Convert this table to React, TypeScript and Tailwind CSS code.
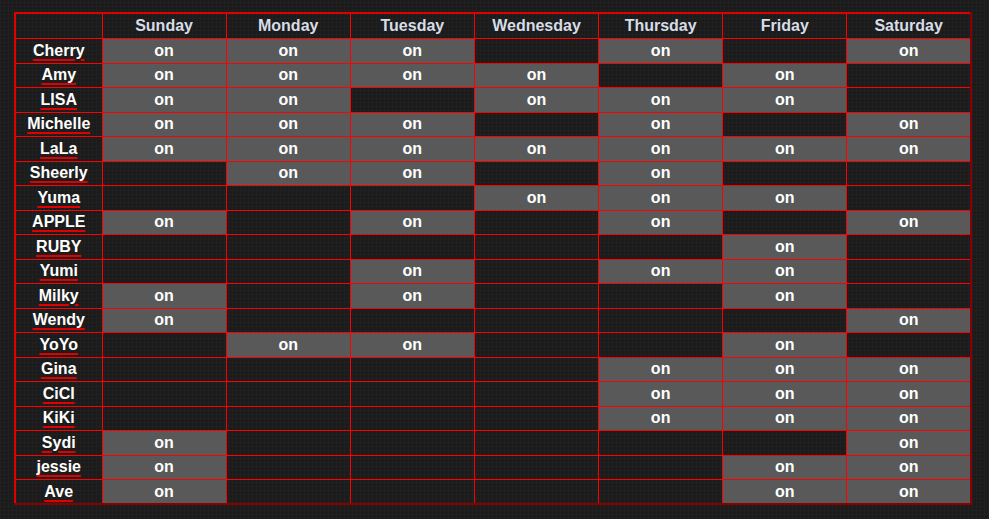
import React from 'react';

const DAYS = ['Sunday', 'Monday', 'Tuesday', 'Wednesday', 'Thursday', 'Friday', 'Saturday'];

// 1 = on, 0 = off (Sun..Sat)
const SCHEDULE: { name: string; days: number[] }[] = [
  { name: 'Cherry', days: [1, 1, 1, 0, 1, 0, 1] },
  { name: 'Amy', days: [1, 1, 1, 1, 0, 1, 0] },
  { name: 'LISA', days: [1, 1, 0, 1, 1, 1, 0] },
  { name: 'Michelle', days: [1, 1, 1, 0, 1, 0, 1] },
  { name: 'LaLa', days: [1, 1, 1, 1, 1, 1, 1] },
  { name: 'Sheerly', days: [0, 1, 1, 0, 1, 0, 0] },
  { name: 'Yuma', days: [0, 0, 0, 1, 1, 1, 0] },
  { name: 'APPLE', days: [1, 0, 1, 0, 1, 0, 1] },
  { name: 'RUBY', days: [0, 0, 0, 0, 0, 1, 0] },
  { name: 'Yumi', days: [0, 0, 1, 0, 1, 1, 0] },
  { name: 'Milky', days: [1, 0, 1, 0, 0, 1, 0] },
  { name: 'Wendy', days: [1, 0, 0, 0, 0, 0, 1] },
  { name: 'YoYo', days: [0, 1, 1, 0, 0, 1, 0] },
  { name: 'Gina', days: [0, 0, 0, 0, 1, 1, 1] },
  { name: 'CiCI', days: [0, 0, 0, 0, 1, 1, 1] },
  { name: 'KiKi', days: [0, 0, 0, 0, 1, 1, 1] },
  { name: 'Sydi', days: [1, 0, 0, 0, 0, 0, 1] },
  { name: 'jessie', days: [1, 0, 0, 0, 0, 1, 1] },
  { name: 'Ave', days: [1, 0, 0, 0, 0, 1, 1] },
];

const App: React.FC = () => {
  return (
    <div className="min-h-[519px] w-full bg-[#1b1b1b] bg-[repeating-linear-gradient(90deg,#202020_0px,#202020_1px,transparent_1px,transparent_4px),repeating-linear-gradient(0deg,#202020_0px,#202020_1px,transparent_1px,transparent_4px)] pl-[14px] pt-[12px] font-['Liberation_Sans',Arial,sans-serif]">
      <table className="w-[958px] table-fixed border-collapse border-t-2 border-l-2 border-r-2 border-b-2 border-t-[#e00000] border-l-[#e00000] border-r-[#8a0000] border-b-[#8a0000] text-[16px] font-bold">
        <colgroup>
          <col className="w-[87px]" />
          {DAYS.map((d) => (
            <col key={d} />
          ))}
        </colgroup>
        <thead>
          <tr className="h-[25px]">
            <th className="border border-[#ff0000] p-0"></th>
            {DAYS.map((d) => (
              <th key={d} className="border border-[#ff0000] p-0 text-center font-bold text-[#d6dde6]">
                {d}
              </th>
            ))}
          </tr>
        </thead>
        <tbody>
          {SCHEDULE.map((row) => (
            <tr key={row.name} className="h-[24.5px]">
              <td className="border border-[#ff0000] p-0 text-center leading-none">
                <span className="text-white underline decoration-[#e00000] decoration-2 underline-offset-[3px]">
                  {row.name}
                </span>
              </td>
              {row.days.map((on, i) => (
                <td
                  key={i}
                  className={
                    'border border-[#ff0000] p-0 text-center leading-none text-white ' +
                    (on ? 'bg-[#595959]' : '')
                  }
                >
                  {on ? 'on' : ''}
                </td>
              ))}
            </tr>
          ))}
        </tbody>
      </table>
    </div>
  );
};

export default App;
